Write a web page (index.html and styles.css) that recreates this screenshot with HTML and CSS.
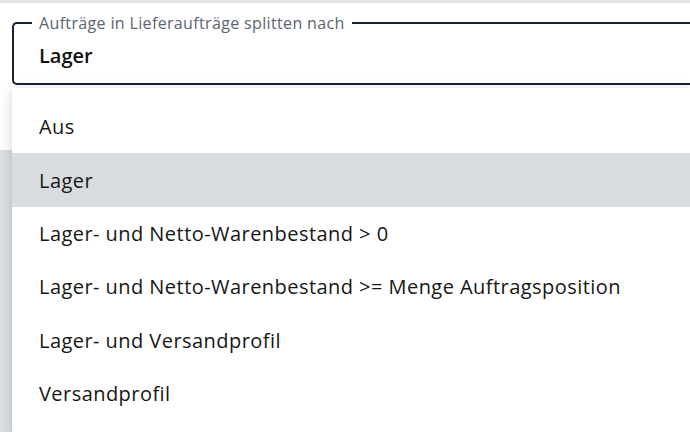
FILE: index.html
```html
<!DOCTYPE html>
<html lang="de">
<head>
<meta charset="utf-8">
<title>Lieferaufträge</title>
<link rel="stylesheet" href="styles.css">
</head>
<body>
<div class="top-bar"></div>
<div class="panel">
  <fieldset class="field">
    <legend class="field-label">Aufträge in Lieferaufträge splitten nach</legend>
    <div class="field-value">Lager</div>
  </fieldset>
</div>
<ul class="menu">
  <li class="menu-item">Aus</li>
  <li class="menu-item is-hover">Lager</li>
  <li class="menu-item">Lager- und Netto-Warenbestand &gt; 0</li>
  <li class="menu-item">Lager- und Netto-Warenbestand &gt;= Menge Auftragsposition</li>
  <li class="menu-item">Lager- und Versandprofil</li>
  <li class="menu-item">Versandprofil</li>
</ul>
</body>
</html>
```

FILE: styles.css
```css
html, body {
  margin: 0;
  padding: 0;
}
body {
  width: 690px;
  height: 432px;
  overflow: hidden;
  position: relative;
  background: #dcdfe2;
  font-family: "Open Sans", "Noto Sans", "Liberation Sans", sans-serif;
  color: #161616;
}
.top-bar {
  height: 3px;
  background: #dfe2e5;
}
.panel {
  background: #ffffff;
  height: 147px;
  padding-top: 10px;
  box-sizing: border-box;
}
.field {
  margin: 0 0 0 12px;
  box-sizing: border-box;
  border: 2px solid #1a2230;
  border-right-width: 0;
  border-radius: 5px 0 0 5px;
  padding: 11px 0 15px 25px;
  background: #fff;
  min-width: 0;
}
.field-label {
  font-size: 16px;
  line-height: 20px;
  letter-spacing: 0.35px;
  color: #5b6470;
  padding: 0 7px;
  margin-left: -7px;
}
.field-value {
  font-size: 20px;
  line-height: 24px;
  font-weight: 600;
  color: #111;
}
.menu {
  position: absolute;
  top: 88px;
  left: 12px;
  right: 0;
  margin: 0;
  padding: 12px 0 12px 0;
  list-style: none;
  background: #ffffff;
  box-shadow: 0 2px 12px rgba(0, 0, 0, 0.18);
}
.menu-item {
  height: 53.4px;
  display: flex;
  align-items: center;
  padding-left: 27px;
  font-size: 20px;
  letter-spacing: 0.45px;
  color: #161616;
}
.menu-item.is-hover {
  background: #d8dce0;
}
```
